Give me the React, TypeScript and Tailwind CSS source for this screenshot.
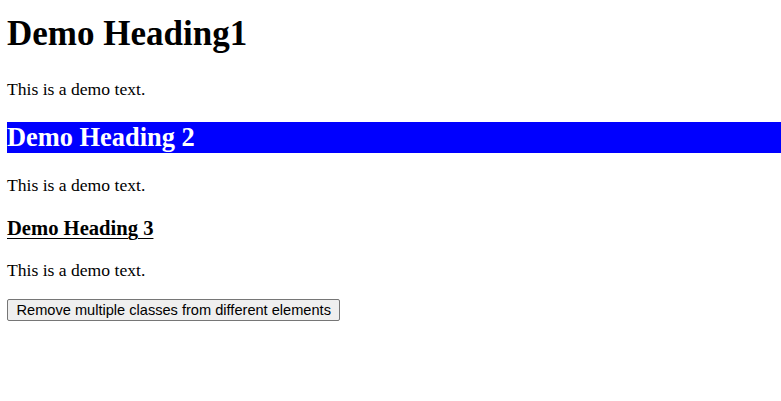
export default function App() {
  return (
    <div className="flex flex-col items-start bg-white px-[7px] pt-[14px] text-black" style={{ fontFamily: '"Liberation Serif", "Times New Roman", serif' }}>
      <h1 className="m-0 h-[40px] text-[35px] font-bold leading-[40px]">Demo Heading1</h1>
      <p className="mt-[25px] h-[20px] text-[17.6px] leading-[20px]">This is a demo text.</p>
      <h2 className="mt-[23px] h-[31px] w-[calc(100%+7px)] bg-[#0000ff] text-[26.4px] font-bold leading-[31px] text-white">Demo Heading 2</h2>
      <p className="mt-[22px] h-[20px] text-[17.6px] leading-[20px]">This is a demo text.</p>
      <h3 className="mt-[21px] h-[24px] text-[20.6px] font-bold leading-[24px] underline decoration-1 underline-offset-[3px]">Demo Heading 3</h3>
      <p className="mt-[20px] h-[20px] text-[17.6px] leading-[20px]">This is a demo text.</p>
      <button
        className="mt-[19px] h-[22px] rounded-[2px] border border-[#767676] bg-[#efefef] px-[8.5px] text-[14.6px] leading-[18px] text-black"
        style={{ fontFamily: '"Liberation Sans", Arial, sans-serif' }}
      >
        Remove multiple classes from different elements
      </button>
    </div>
  );
}
